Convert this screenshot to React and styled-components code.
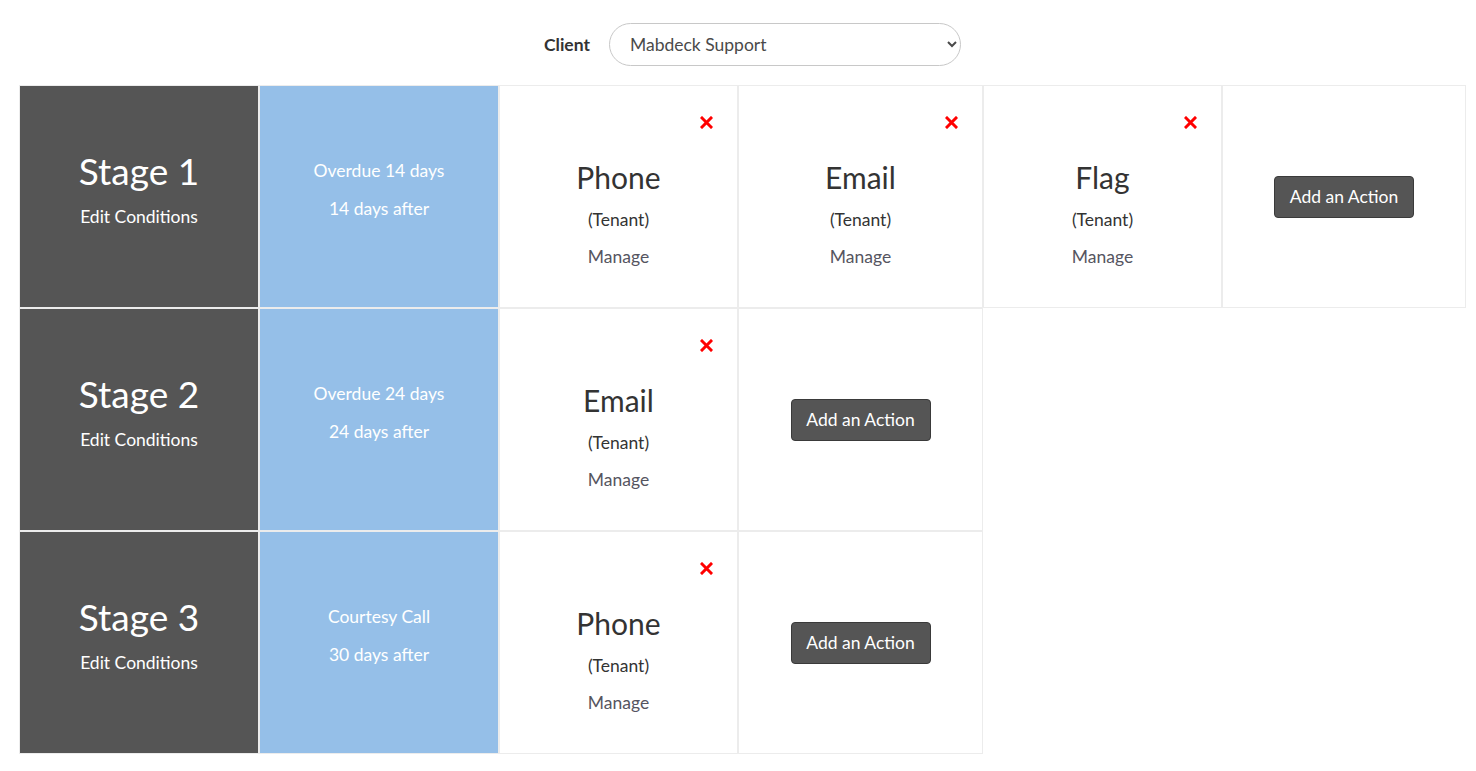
import React, { useState } from "react";
import styled, { createGlobalStyle } from "styled-components";

const GlobalStyle = createGlobalStyle`
  body {
    margin: 0;
    background: #fff;
    font-family: Lato, "Open Sans", sans-serif;
    color: #333;
  }
`;

const stages = [
  {
    id: 1,
    condition: "Overdue 14 days",
    after: "14 days after",
    actions: [
      { type: "Phone", who: "Tenant" },
      { type: "Email", who: "Tenant" },
      { type: "Flag", who: "Tenant" },
    ],
  },
  {
    id: 2,
    condition: "Overdue 24 days",
    after: "24 days after",
    actions: [{ type: "Email", who: "Tenant" }],
  },
  {
    id: 3,
    condition: "Courtesy Call",
    after: "30 days after",
    actions: [{ type: "Phone", who: "Tenant" }],
  },
];

const RemoveIcon = () => (
  <svg width="13" height="13" viewBox="0 0 13 13">
    <path
      d="M2 2 L11 11 M11 2 L2 11"
      stroke="#ff0000"
      strokeWidth="3"
      strokeLinecap="square"
    />
  </svg>
);

const App = () => {
  const [client, setClient] = useState("Mabdeck Support");

  return (
    <Page>
      <GlobalStyle />
      <Header>
        <Label htmlFor="client">Client</Label>
        <Select
          id="client"
          value={client}
          onChange={(e) => setClient(e.target.value)}
        >
          <option>Mabdeck Support</option>
          <option>Other Client</option>
        </Select>
      </Header>
      <Board>
        {stages.map((stage) => (
          <Row key={stage.id}>
            <StageCell>
              <StageTitle>Stage {stage.id}</StageTitle>
              <EditLink>Edit Conditions</EditLink>
            </StageCell>
            <ConditionCell>
              <ConditionLine>{stage.condition}</ConditionLine>
              <ConditionLine>{stage.after}</ConditionLine>
            </ConditionCell>
            {stage.actions.map((action, i) => (
              <ActionCell key={i}>
                <RemoveButton type="button">
                  <RemoveIcon />
                </RemoveButton>
                <ActionTitle>{action.type}</ActionTitle>
                <ActionWho>({action.who})</ActionWho>
                <ManageLink>Manage</ManageLink>
              </ActionCell>
            ))}
            <AddCell>
              <AddButton type="button">Add an Action</AddButton>
            </AddCell>
          </Row>
        ))}
      </Board>
    </Page>
  );
};

export default App;

const Page = styled.div`
  padding: 23px 0 20px 19px;
`;

const Header = styled.div`
  display: flex;
  align-items: center;
  justify-content: center;
  gap: 19px;
  padding-left: 10px;
  margin-bottom: 19px;
`;

const Label = styled.label`
  font-weight: 700;
  font-size: 17.5px;
  color: #333;
`;

const Select = styled.select`
  width: 352px;
  height: 43px;
  border: 1px solid #c8c8c8;
  border-radius: 22px;
  background: #fff;
  padding: 0 12px 0 16px;
  font-family: Lato, sans-serif;
  font-size: 17.5px;
  color: #4a4a4a;
  outline: 0;
`;

const Board = styled.div`
  display: flex;
  flex-direction: column;
`;

const Row = styled.div`
  display: grid;
  grid-template-columns: 240px 240px 239px 245px 239px 244px;
  height: 223px;
`;

const Cell = styled.div`
  box-sizing: border-box;
  border: 1px solid #ececec;
  display: flex;
  flex-direction: column;
  align-items: center;
  text-align: center;
`;

const StageCell = styled(Cell)`
  background: #555555;
  color: #fff;
  justify-content: center;
  padding-bottom: 18px;
`;

const StageTitle = styled.div`
  font-size: 37px;
  line-height: 44px;
`;

const EditLink = styled.a`
  font-size: 17.5px;
  line-height: 21px;
  margin-top: 13px;
  cursor: pointer;
`;

const ConditionCell = styled(Cell)`
  background: #95bfe8;
  color: #fff;
  justify-content: center;
  padding-bottom: 14px;
`;

const ConditionLine = styled.div`
  font-size: 17.5px;
  line-height: 21px;
  & + & {
    margin-top: 17px;
  }
`;

const ActionCell = styled(Cell)`
  padding-top: 30px;
`;

const RemoveButton = styled.button`
  align-self: flex-end;
  margin-right: 24px;
  width: 13px;
  height: 13px;
  padding: 0;
  border: 0;
  background: none;
  cursor: pointer;
  display: flex;
`;

const ActionTitle = styled.div`
  font-size: 30px;
  line-height: 36px;
  margin-top: 30px;
  color: #333;
`;

const ActionWho = styled.div`
  font-size: 17.5px;
  line-height: 21px;
  margin-top: 14px;
  color: #333;
`;

const ManageLink = styled.a`
  font-size: 17.5px;
  line-height: 21px;
  margin-top: 16px;
  color: #555560;
  cursor: pointer;
`;

const AddCell = styled(Cell)`
  justify-content: center;
`;

const AddButton = styled.button`
  width: 140px;
  height: 42px;
  background: #555;
  border: 1px solid #3a3a3a;
  border-radius: 4px;
  color: #fff;
  font-family: Lato, sans-serif;
  font-size: 17.5px;
  cursor: pointer;
`;
